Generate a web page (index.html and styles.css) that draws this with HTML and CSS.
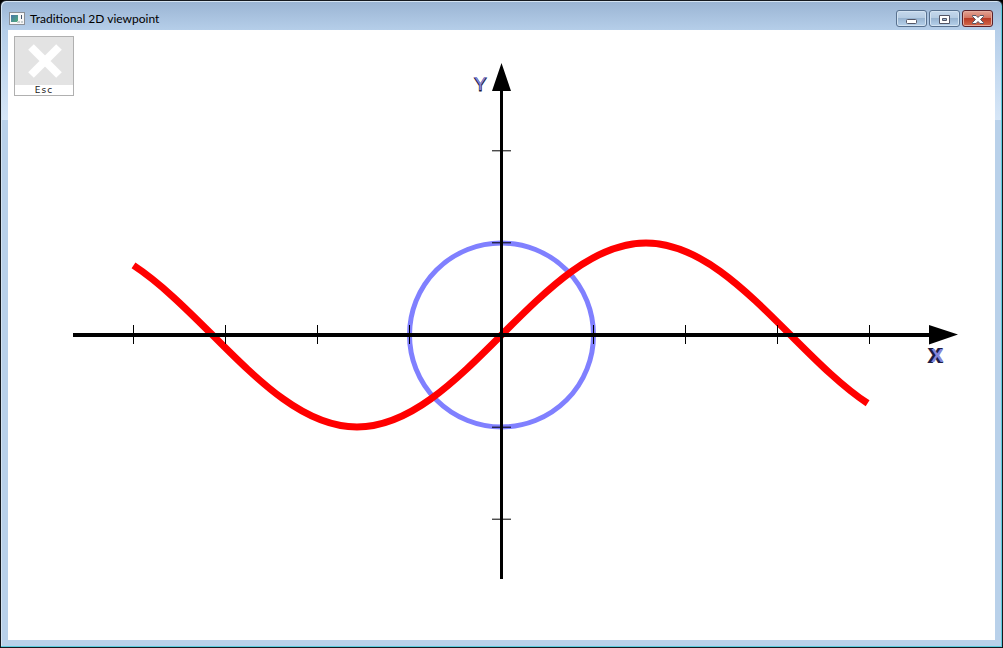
FILE: index.html
```html
<!DOCTYPE html>
<html lang="en">
<head>
<meta charset="utf-8">
<title>Traditional 2D viewpoint</title>
<link rel="stylesheet" href="styles.css">
</head>
<body>
<div class="window">
  <header class="titlebar">
    <svg class="app-icon" viewBox="0 0 16 14" aria-hidden="true">
      <defs>
        <linearGradient id="app-fill" x1="0" y1="0" x2="1" y2="1">
          <stop offset="0" stop-color="#4773a8"/>
          <stop offset="1" stop-color="#4fae7a"/>
        </linearGradient>
      </defs>
      <rect x=".5" y=".5" width="15" height="12" fill="#f7f7f7" stroke="#8a8f96"/>
      <rect x="2" y="3" width="7" height="7" fill="url(#app-fill)"/>
      <path d="M12.5 3v4" stroke="#46566e"/>
      <path d="M8 9h3v2H8zM12 9h2v2h-2z" fill="#c9d0d0"/>
    </svg>
    <h1 class="title">Traditional 2D viewpoint</h1>
    <div class="controls">
      <button class="control" type="button" aria-label="Minimize">
        <svg class="glyph" viewBox="0 0 16 12"><rect x="2.500" y="6.500" width="10" height="4" rx="1" fill="#fff" stroke="#535666"/></svg>
      </button>
      <button class="control" type="button" aria-label="Maximize">
        <svg class="glyph" viewBox="0 0 16 12"><path fill-rule="evenodd" d="M2.500 2.500h10v8h-10zM5.500 5.500v2h4v-2z" fill="#fff" stroke="#535666"/></svg>
      </button>
      <button class="control close" type="button" aria-label="Close">
        <svg class="glyph" viewBox="0 0 16 12"><path d="M2.500 2.500h3.500l2 2 2-2h3.500v1L10.500 6.500l3 3v1H10l-2-2-2 2H2.500v-1l3-3-3-3z" fill="#fff" stroke="#535666"/></svg>
      </button>
    </div>
  </header>
  <main class="client">
    <button class="esc" type="button">
      <svg class="esc-icon" viewBox="0 0 58 48" aria-hidden="true"><path d="M16 10 44 38M44 10 16 38" stroke="#fff" stroke-width="8"/></svg>
      <span class="esc-key">Esc</span>
    </button>
    <svg class="plot" viewBox="8 30 987 610" role="img" aria-label="Sine curve and unit circle">
      <circle class="circle" cx="501.500" cy="335" r="92"/>
      <path class="sine" d="M133.500 265.400C159.800 282.600 186.100 308.700 212.500 335C259.600 382.100 304.700 427 357 427C409.300 427 454.400 382.100 501.500 335C548.600 287.900 593.700 243 646 243C698.300 243 743.400 287.900 790.500 335C816.700 361.100 842 386.600 867.600 403.300"/>
      <path class="axis" d="M501.500 90V579"/>
      <path class="axis axis-x" d="M73 335H930"/>
      <path class="tick" d="M133.500 325v19M225.500 325v19M317.500 325v19M409.500 325v19M593.500 325v19M685.500 325v19M777.500 325v19M869.500 325v19M492 150.800h19M492 242.800h19M492 427.200h19M492 519.200h19"/>
      <path d="M929 325 958 334.500 929 344.500zM492 91 501.500 63 511 91z"/>
      <text class="label label-deep" x="929" y="362">X</text>
      <text class="label" x="931" y="362">X</text>
      <text class="label label-y label-deep" x="474" y="91">Y</text>
      <text class="label label-y" x="474" y="90">Y</text>
    </svg>
  </main>
</div>
</body>
</html>
```
FILE: styles.css
```css
* { box-sizing: border-box; }

body {
  margin: 0;
  background: #000;
  font-family: Lato, "Open Sans", sans-serif;
}

.window {
  display: flex;
  flex-direction: column;
  height: 100vh;
  padding: 0 6px 6px;
  border: 1px solid #15191f;
  border-radius: 6px 6px 0 0;
  background: linear-gradient(#9ab4d3, #b5cee9 29px, #d6e6f7 119px, #b9d1ea 119px);
  box-shadow: inset -1px -1px #5ccbdd, inset 1px 1px #d5e4f2;
}

.titlebar {
  display: flex;
  align-items: center;
  height: 29px;
  padding: 6px 3px 0 2px;
}

.app-icon {
  width: 16px;
  height: 14px;
  margin-right: 5px;
}

.title {
  margin: 0;
  font-size: 12px;
  font-weight: 400;
  line-height: 16px;
  color: #000;
}

.controls {
  display: flex;
  gap: 2px;
  margin-left: auto;
}

.control {
  display: grid;
  place-items: center;
  width: 31px;
  height: 17px;
  padding: 0;
  border: 1px solid #58718f;
  border-radius: 3px;
  background: linear-gradient(#c5d8ec, #b4cbe2 50%, #98b4d1 50%, #b6d1eb);
  box-shadow: inset 0 0 0 1px #d3e3f2;
}

.close {
  border-color: #5a2029;
  background: linear-gradient(#e2a394, #d2705d 50%, #b83b26 50%, #d36a4c);
  box-shadow: inset 0 0 0 1px #e5ab9d;
}

.glyph {
  width: 16px;
  height: 12px;
}

.client {
  position: relative;
  flex: 1;
  min-height: 0;
  margin: 0 1px 1px;
  background: #fff;
}

.plot {
  display: block;
  width: 100%;
  height: 100%;
}

.esc {
  position: absolute;
  top: 6px;
  left: 6px;
  display: flex;
  flex-direction: column;
  width: 60px;
  height: 60px;
  padding: 0;
  border: 1px solid #b0b0b0;
  background: #fff;
}

.esc-icon {
  width: 58px;
  height: 48px;
  background: #e3e3e3;
}

.esc-key {
  width: 100%;
  font: 9px/10px "DejaVu Sans", sans-serif;
  letter-spacing: 1px;
  color: #222;
}

.circle {
  fill: none;
  stroke: #8080ff;
  stroke-width: 5;
}

.sine {
  fill: none;
  stroke: #f00;
  stroke-width: 7;
}

.axis {
  fill: none;
  stroke: #000;
  stroke-width: 3;
}

.axis-x {
  stroke-width: 4;
}

.tick {
  fill: none;
  stroke: #000;
  stroke-width: 1;
}

.label {
  font: 700 19px "Liberation Sans", sans-serif;
  fill: #8585d8;
}

.label-deep {
  fill: #1c1c44;
  stroke: #1c1c44;
  stroke-width: 2;
}

.label-y {
  font-weight: 400;
  stroke-width: 1;
}
```
